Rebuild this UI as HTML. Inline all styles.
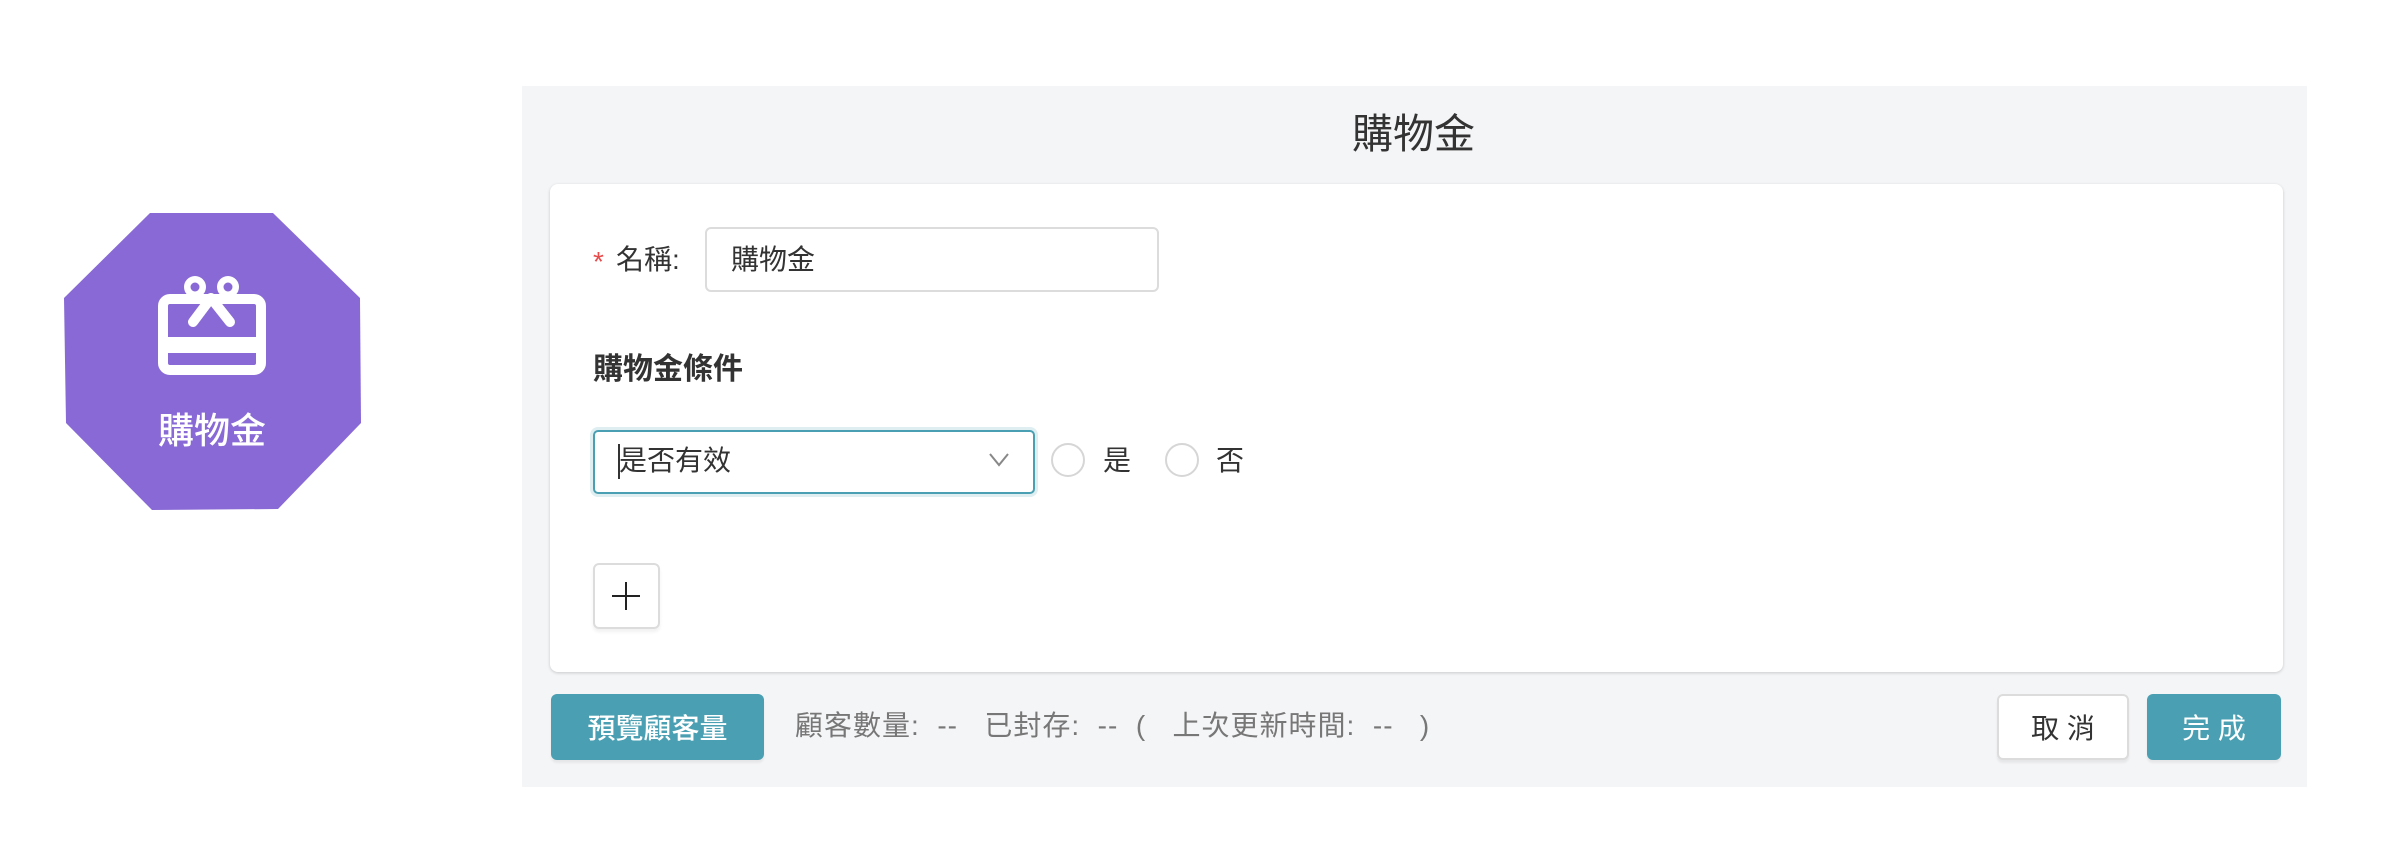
<!DOCTYPE html>
<html><head><meta charset="utf-8"><style>
*{box-sizing:border-box;margin:0;padding:0}
body{width:2407px;height:849px;background:#fff;position:relative;overflow:hidden;font-family:"Liberation Sans","Noto Sans CJK TC",sans-serif;color:#333}
.a{position:absolute}
.panel{left:522px;top:86px;width:1785px;height:701px;background:#f4f5f7}
.card{left:550px;top:184px;width:1733px;height:488px;background:#fff;border-radius:8px;box-shadow:0 1px 3px rgba(0,0,0,.18)}
.t{font-size:28px;line-height:1;white-space:nowrap}
.btn{border-radius:6px;display:flex;align-items:center;justify-content:center;font-size:28px;box-shadow:0 3px 2px rgba(0,0,0,.06)}
</style></head><body>
<svg class="a" style="left:0;top:0" width="420" height="560">
<polygon points="150,213 273,213 360,298 361,423 278,509 152,510 66,423 64,298" fill="#8869d5"/>
<rect x="163" y="299" width="98" height="71" rx="7" fill="none" stroke="#fff" stroke-width="10"/>
<rect x="163" y="337" width="98" height="16" fill="#fff"/>
<path d="M193 322 L211 298 L230 322" fill="none" stroke="#fff" stroke-width="10" stroke-linecap="round" stroke-linejoin="round"/>
<circle cx="195" cy="287" r="11" fill="#fff"/>
<circle cx="228" cy="287" r="11" fill="#fff"/>
<circle cx="195" cy="287" r="4.5" fill="#8869d5"/>
<circle cx="228" cy="287" r="4.5" fill="#8869d5"/>
<text x="212" y="443" fill="#fff" font-size="36" font-weight="500" text-anchor="middle" font-family="Liberation Sans,Noto Sans CJK TC,sans-serif">購物金</text>
</svg>
<div class="a panel"></div>
<div class="a t" style="left:1352px;top:114px;font-size:41px;color:#333">購物金</div>
<div class="a card"></div>
<div class="a t" style="left:593px;top:248px;color:#e94b4b">*</div>
<div class="a t" style="left:616px;top:246px">名稱:</div>
<div class="a" style="left:705px;top:227px;width:454px;height:65px;border:2px solid #dcdcdc;border-radius:6px"></div>
<div class="a t" style="left:731px;top:246px">購物金</div>
<div class="a t" style="left:593px;top:355px;font-size:30px;font-weight:bold">購物金條件</div>
<div class="a" style="left:593px;top:430px;width:442px;height:64px;border:2px solid #4a9fb2;border-radius:5px;box-shadow:0 0 0 3px rgba(74,159,178,.18)"></div>
<div class="a" style="left:618px;top:444px;width:2px;height:35px;background:#333"></div>
<div class="a t" style="left:619px;top:447px">是否有效</div>
<svg class="a" style="left:988px;top:452px" width="22" height="16"><path d="M2 2 L11 13 L20 2" fill="none" stroke="#888" stroke-width="2"/></svg>
<div class="a" style="left:1051px;top:443px;width:34px;height:34px;border:2px solid #d6d6d6;border-radius:50%"></div>
<div class="a t" style="left:1103px;top:447px">是</div>
<div class="a" style="left:1165px;top:443px;width:34px;height:34px;border:2px solid #d6d6d6;border-radius:50%"></div>
<div class="a t" style="left:1216px;top:447px">否</div>
<div class="a" style="left:593px;top:563px;width:67px;height:66px;border:2px solid #dcdcdc;border-radius:6px;box-shadow:0 3px 3px rgba(0,0,0,.06)"></div>
<div class="a" style="left:612px;top:595px;width:28px;height:2px;background:#222"></div>
<div class="a" style="left:625px;top:582px;width:2px;height:28px;background:#222"></div>
<div class="a btn" style="left:551px;top:694px;width:213px;height:66px;background:#4a9fb2;color:#fff;font-weight:500">預覽顧客量</div>
<div class="a t" style="left:795px;top:712px;color:#777;letter-spacing:1px">顧客數量:&nbsp; --&nbsp;&nbsp; 已封存:&nbsp; --&nbsp;&nbsp;(&nbsp;&nbsp; 上次更新時間:&nbsp; --&nbsp;&nbsp; )</div>
<div class="a btn" style="left:1997px;top:694px;width:132px;height:66px;background:#fff;border:2px solid #dcdcdc;color:#333">取 消</div>
<div class="a btn" style="left:2147px;top:694px;width:134px;height:66px;background:#4a9fb2;color:#fff">完 成</div>
</body></html>
